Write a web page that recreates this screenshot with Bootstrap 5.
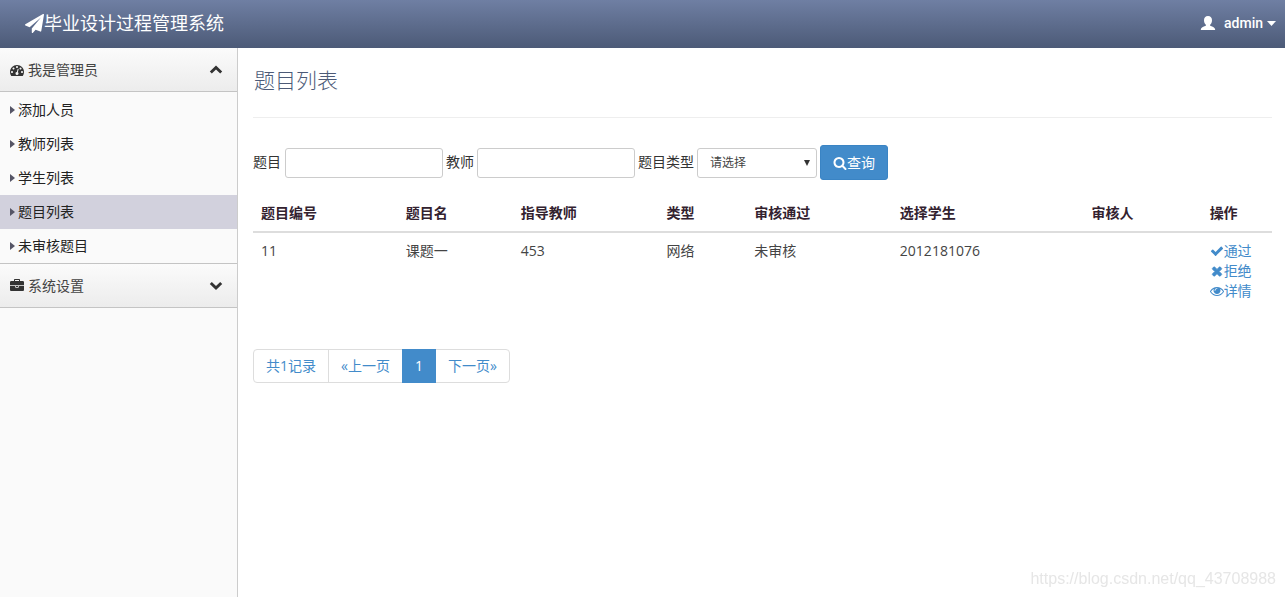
<!DOCTYPE html>
<html lang="zh-CN">
<head>
<meta charset="utf-8">
<meta name="viewport" content="width=device-width, initial-scale=1">
<title>毕业设计过程管理系统</title>
<link rel="stylesheet" href="https://cdn.jsdelivr.net/npm/bootstrap@5.3.0/dist/css/bootstrap.min.css">
<style>
  body { font-family: "Open Sans", "Noto Sans CJK SC", sans-serif; font-size: 14px; line-height: 20px; font-weight: 400; color: #333; }
  a { color: #428bca; text-decoration: none; }
  .ico { width: 14px; height: 14px; fill: currentColor; flex: none; }
  .topbar { height: 48px; background: linear-gradient(#6f7fa3, #4c5a77); padding: 0 9px 2px 25px; }
  .brand { font-size: 18px; color: #fff; font-weight: 400; }
  .brand .ico { width: 19px; height: 19px; }
  .user-menu { font-family: Roboto, "Noto Sans CJK SC", sans-serif; font-weight: 500; color: #fff; border: 0; background: none; padding: 0; }
  .user-menu .ico { width: 16px; height: 16px; }
  .user-menu .caret-down { width: 9px; height: 5px; fill: #fff; }
  .sidebar { width: 238px; flex: none; background: #fafafa; border-right: 1px solid #ccc; }
  .section-toggle { height: 44px; width: 100%; border: 0; border-bottom: 1px solid #c4c4c4; background: linear-gradient(#fbfbfb, #ececec); color: #444; padding: 0 14px 0 10px; gap: 4px; }
  .section-toggle .ico { fill: #333; }
  .section-toggle.second { height: 45px; border-top: 1px solid #c4c4c4; }
  .side-list { padding-top: 1px; }
  .side-link { height: 34px; padding-left: 10px; gap: 3px; color: #222; }
  .side-link svg { width: 5px; height: 8px; fill: #556; }
  .side-link.active { background: #d2d1dd; }
  main { padding: 0 13px 0 15px; min-width: 0; }
  h1 { font-size: 21px; line-height: 24px; font-weight: 300; color: #4c5a77; margin: 20px 0 25px; padding-left: 1px; }
  .rule { border-top: 1px solid #eee; margin-bottom: 27px; }
  .search-form { gap: 3px; }
  .search-form label { min-height: 22px; }
  .field { height: 30px; width: 158px; border: 1px solid #ccc; border-radius: 3px; padding: 0 12px; font-size: 12px; background-color: #fff; color: #444; }
  #topic { margin-left: 1px; }
  select.field { width: 120px; appearance: none; background: #fff url("data:image/svg+xml,%3Csvg xmlns='http://www.w3.org/2000/svg' width='6' height='6'%3E%3Cpath d='M0 0h6L3 6z' fill='%23333'/%3E%3C/svg%3E") no-repeat right 6px center; }
  .btn-query { height: 35px; font-size: 14px; line-height: 20px; padding: 0 12px; border-radius: 3px; color: #fff; background: #428bca; border: 1px solid #3a84c4; }
  .topics { table-layout: fixed; margin: 15px 0 40px; --bs-table-color: #333; }
  .topics th, .topics td { padding: 8px; border: 0; }
  .topics th { border-bottom: 2px solid #ddd; font-weight: 700; color: #33222f; }
  .topics td { color: #444; }
  .pagination { --bs-pagination-color: #428bca; --bs-pagination-border-color: #ddd; --bs-pagination-padding-x: 12px; --bs-pagination-padding-y: 6px; --bs-pagination-font-size: 14px; --bs-pagination-border-radius: 4px; --bs-pagination-active-bg: #428bca; --bs-pagination-active-border-color: #428bca; }
  .watermark { right: 9px; bottom: 8px; font: 16px/20px "Liberation Sans", sans-serif; color: #e6e6e6; }
</style>
</head>
<body class="d-flex flex-column min-vh-100">
<header class="topbar d-flex align-items-center justify-content-between">
  <a class="brand d-flex align-items-center" href="#"><svg class="ico" viewBox="0 0 1792 1792"><path d="M1764 11q33 24 27 64l-256 1536q-5 29-32 45-14 8-31 8-11 0-24-5l-453-185-242 295q-18 23-49 23-13 0-22-4-19-7-30.500-23.500t-11.500-36.500v-349l864-1059-1069 925-395-162q-37-14-40-55-2-40 32-59l1664-960q15-9 32-9 20 0 36 11z"/></svg>毕业设计过程管理系统</a>
  <button type="button" class="user-menu d-flex align-items-center"><svg class="ico me-2" viewBox="0 0 16 16"><path d="M8 1c2.600 0 4 1.700 4 4.200 0 1.900-.8 3.600-1.900 4.600v1c2.600 1 4.900 1.400 5.100 4.200H.8c.2-2.800 2.500-3.200 5.100-4.200v-1C4.800 8.800 4 7.100 4 5.200 4 2.700 5.400 1 8 1z"/></svg><span class="me-1">admin</span><svg class="caret-down" viewBox="0 0 9 5"><path d="M0 0h9L4.500 5z"/></svg></button>
</header>
<div class="d-flex flex-grow-1">
  <nav class="sidebar">
    <button type="button" class="section-toggle d-flex align-items-center"><svg class="ico" viewBox="0 0 1792 1792"><path d="M384 1152q0-53-37.500-90.500t-90.500-37.500-90.500 37.500-37.500 90.500 37.500 90.500 90.500 37.500 90.500-37.500 37.500-90.500zm192-448q0-53-37.500-90.500t-90.500-37.500-90.500 37.500-37.500 90.500 37.500 90.500 90.500 37.500 90.500-37.500 37.500-90.500zm428 481l101-382q6-26-7.500-48.500t-38.500-29.500-48 6.500-30 39.500l-101 382q-60 5-107 43.500t-63 98.500q-20 77 20 146t117 89 146-20 89-117q16-60-6-117t-72-91zm660-33q0-53-37.500-90.500t-90.500-37.500-90.500 37.500-37.500 90.500 37.500 90.500 90.500 37.500 90.500-37.500 37.500-90.500zm-640-640q0-53-37.500-90.500t-90.500-37.500-90.500 37.500-37.500 90.500 37.500 90.500 90.500 37.500 90.500-37.500 37.500-90.500zm448 192q0-53-37.500-90.500t-90.500-37.500-90.500 37.500-37.500 90.500 37.500 90.500 90.500 37.500 90.500-37.500 37.500-90.500zm320 448q0 261-141 483-19 29-54 29h-1402q-35 0-54-29-141-221-141-483 0-182 71-348t191-286 286-191 348-71 348 71 286 191 191 286 71 348z"/></svg>我是管理员<svg class="ico ms-auto" viewBox="0 0 14 14"><path d="M7 2.500l6.200 6-2 2L7 6.400l-4.200 4.100-2-2z"/></svg></button>
    <div class="side-list">
      <a class="side-link d-flex align-items-center" href="#"><svg viewBox="0 0 5 8"><path d="M0 0l5 4-5 4z"/></svg>添加人员</a>
      <a class="side-link d-flex align-items-center" href="#"><svg viewBox="0 0 5 8"><path d="M0 0l5 4-5 4z"/></svg>教师列表</a>
      <a class="side-link d-flex align-items-center" href="#"><svg viewBox="0 0 5 8"><path d="M0 0l5 4-5 4z"/></svg>学生列表</a>
      <a class="side-link active d-flex align-items-center" href="#"><svg viewBox="0 0 5 8"><path d="M0 0l5 4-5 4z"/></svg>题目列表</a>
      <a class="side-link d-flex align-items-center" href="#"><svg viewBox="0 0 5 8"><path d="M0 0l5 4-5 4z"/></svg>未审核题目</a>
    </div>
    <button type="button" class="section-toggle second d-flex align-items-center"><svg class="ico" viewBox="0 0 1792 1792"><path d="M640 256h512v-128h-512v128zm1152 640v480q0 66-47 113t-113 47h-1472q-66 0-113-47t-47-113v-480h672v160q0 26 19 45t45 19h320q26 0 45-19t19-45v-160h672zm-768 0v128h-256v-128h256zm768-480v384h-1792v-384q0-66 47-113t113-47h352v-160q0-40 28-68t68-28h576q40 0 68 28t28 68v160h352q66 0 113 47t47 113z"/></svg>系统设置<svg class="ico ms-auto" viewBox="0 0 14 14"><path d="M7 11L.8 5l2-2L7 7.100 11.200 3l2 2z"/></svg></button>
  </nav>
  <main class="flex-grow-1">
    <h1>题目列表</h1>
    <div class="rule"></div>
    <form class="search-form d-flex flex-wrap align-items-center">
      <label for="topic">题目</label><input class="field" id="topic" type="text">
      <label for="teacher">教师</label><input class="field" id="teacher" type="text">
      <label for="kind">题目类型</label><select class="field" id="kind"><option>请选择</option></select>
      <button type="button" class="btn btn-query d-flex align-items-center"><svg class="ico" viewBox="0 0 1792 1792"><path d="M1216 832q0-185-131.500-316.500t-316.500-131.500-316.500 131.500-131.500 316.500 131.500 316.500 316.500 131.500 316.500-131.500 131.500-316.500zm512 832q0 52-38 90t-90 38q-54 0-90-38l-343-342q-179 124-399 124-143 0-273.500-55.500t-225-150-150-225-55.500-273.500 55.500-273.500 150-225 225-150 273.500-55.500 273.500 55.500 225 150 150 225 55.500 273.500q0 220-124 399l343 343q37 37 37 90z"/></svg>查询</button>
    </form>
    <table class="table topics">
      <colgroup><col style="width:14.2%"><col style="width:11.3%"><col style="width:14.3%"><col style="width:8.6%"><col style="width:14.3%"><col style="width:18.8%"><col style="width:11.6%"><col></colgroup>
      <thead><tr><th>题目编号</th><th>题目名</th><th>指导教师</th><th>类型</th><th>审核通过</th><th>选择学生</th><th>审核人</th><th>操作</th></tr></thead>
      <tbody><tr><td>11</td><td>课题一</td><td>453</td><td>网络</td><td>未审核</td><td>2012181076</td><td></td><td>
        <a class="d-flex align-items-center" href="#"><svg class="ico" viewBox="0 0 1792 1792"><path d="M1671 566q0 40-28 68l-724 724-136 136q-28 28-68 28t-68-28l-136-136-362-362q-28-28-28-68t28-68l136-136q28-28 68-28t68 28l294 295 656-657q28-28 68-28t68 28l136 136q28 28 28 68z"/></svg>通过</a>
        <a class="d-flex align-items-center" href="#"><svg class="ico" viewBox="0 0 1792 1792"><path d="M1490 1322q0 40-28 68l-136 136q-28 28-68 28t-68-28l-294-294-294 294q-28 28-68 28t-68-28l-136-136q-28-28-28-68t28-68l294-294-294-294q-28-28-28-68t28-68l136-136q28-28 68-28t68 28l294 294 294-294q28-28 68-28t68 28l136 136q28 28 28 68t-28 68l-294 294 294 294q28 28 28 68z" stroke="currentColor" stroke-width="110"/></svg>拒绝</a>
        <a class="d-flex align-items-center" href="#"><svg class="ico" viewBox="0 0 1792 1792"><path d="M1664 960q-152-236-381-353 61 104 61 225 0 185-131.500 316.500t-316.500 131.500-316.500-131.500-131.500-316.500q0-121 61-225-229 117-381 353 133 205 333.500 326.500t434.500 121.500 434.500-121.500 333.500-326.500zm-720-384q0-20-14-34t-34-14q-125 0-214.500 89.500t-89.500 214.500q0 20 14 34t34 14 34-14 14-34q0-86 61-147t147-61q20 0 34-14t14-34zm848 384q0 34-20 69-140 230-376.500 368.500t-499.500 138.500-499.500-139-376.500-368q-20-35-20-69t20-69q140-229 376.500-368t499.500-139 499.500 139 376.500 368q20 35 20 69z"/></svg>详情</a>
      </td></tr></tbody>
    </table>
    <ul class="pagination">
      <li class="page-item"><a class="page-link" href="#">共1记录</a></li>
      <li class="page-item"><a class="page-link" href="#">«上一页</a></li>
      <li class="page-item active"><a class="page-link" href="#">1</a></li>
      <li class="page-item"><a class="page-link" href="#">下一页»</a></li>
    </ul>
  </main>
</div>
<div class="watermark position-fixed">https://blog.csdn.net/qq_43708988</div>
<script src="https://cdn.jsdelivr.net/npm/bootstrap@5.3.0/dist/js/bootstrap.bundle.min.js"></script>
</body>
</html>
